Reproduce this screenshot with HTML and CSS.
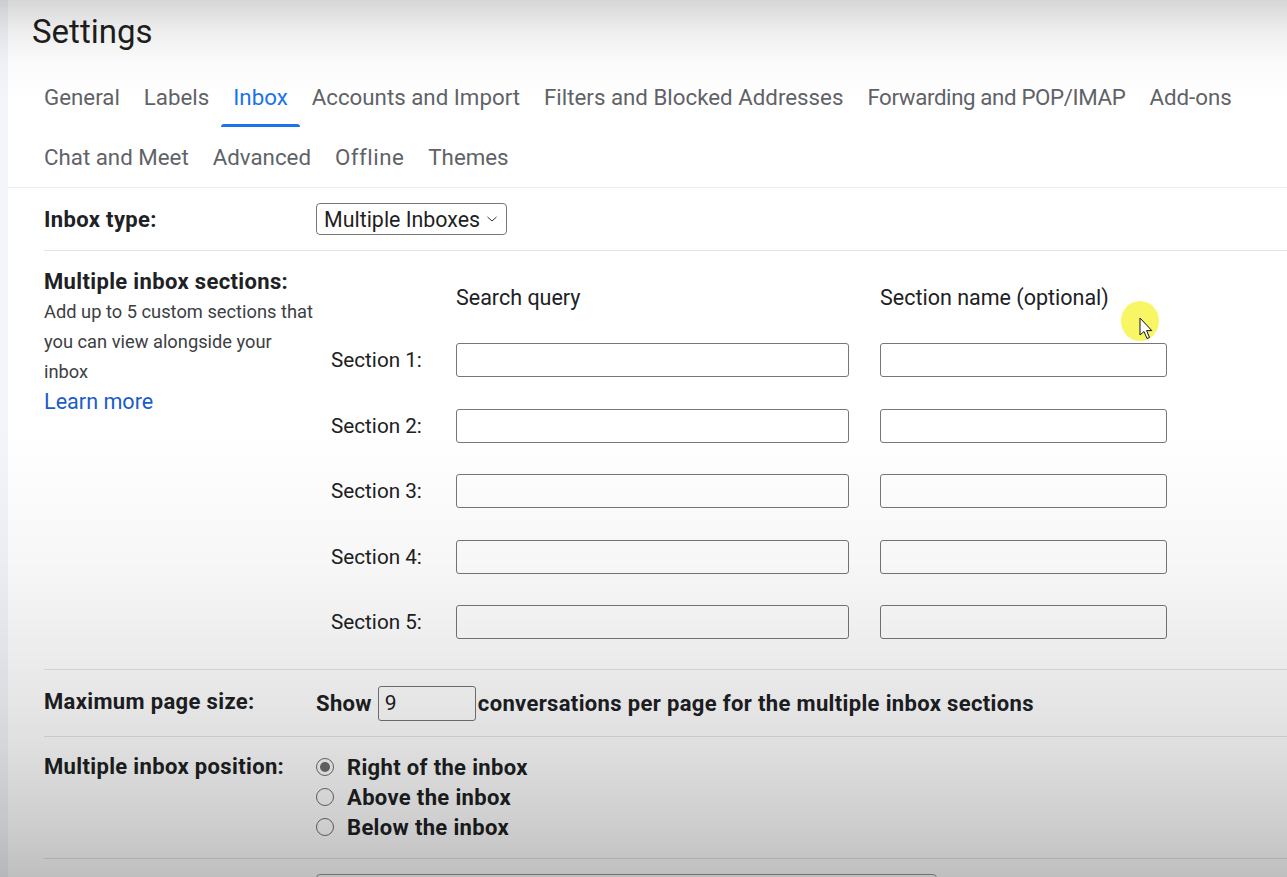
FILE: index.html
```html
<!DOCTYPE html>
<html lang="en">
<head>
<meta charset="utf-8">
<title>Settings</title>
<link rel="stylesheet" href="styles.css">
</head>
<body>
<div class="page">
  <main class="panel">
    <h1 class="title">Settings</h1>
    <nav class="tabs">
      <div class="tab-row">
        <a class="tab">General</a>
        <a class="tab">Labels</a>
        <a class="tab active">Inbox</a>
        <a class="tab">Accounts and Import</a>
        <a class="tab">Filters and Blocked Addresses</a>
        <a class="tab tab-tight">Forwarding and POP/IMAP</a>
        <a class="tab">Add-ons</a>
      </div>
      <div class="tab-row">
        <a class="tab">Chat and Meet</a>
        <a class="tab">Advanced</a>
        <a class="tab tab-wide">Offline</a>
        <a class="tab">Themes</a>
      </div>
    </nav>

    <section class="content">
      <div class="row row-type">
        <div class="label">Inbox type:</div>
        <div class="value">
          <div class="select">Multiple Inboxes
            <svg class="chev" width="12" height="8" viewBox="0 0 12 8"><path d="M1.5 2 L6 6 L10.5 2" fill="none" stroke="#333" stroke-width="1"/></svg>
          </div>
        </div>
      </div>

      <div class="row row-sections">
        <div class="label">
          <div class="label-title">Multiple inbox sections:</div>
          <p class="desc">Add up to 5 custom sections that you can view alongside your inbox</p>
          <a class="link">Learn more</a>
        </div>
        <div class="sections">
          <div></div>
          <div class="col-head">Search query</div>
          <div class="col-head">Section name (optional)</div>

          <div class="sec-label">Section 1:</div>
          <div class="field wide"></div>
          <div class="field narrow"></div>

          <div class="sec-label">Section 2:</div>
          <div class="field wide"></div>
          <div class="field narrow"></div>

          <div class="sec-label">Section 3:</div>
          <div class="field wide"></div>
          <div class="field narrow"></div>

          <div class="sec-label">Section 4:</div>
          <div class="field wide"></div>
          <div class="field narrow"></div>

          <div class="sec-label">Section 5:</div>
          <div class="field wide"></div>
          <div class="field narrow"></div>
        </div>
      </div>

      <div class="row row-size">
        <div class="label">Maximum page size:</div>
        <div class="value bold-line">
          <span>Show</span>
          <div class="num-field">9</div>
          <span class="after">conversations per page for the multiple inbox sections</span>
        </div>
      </div>

      <div class="row row-pos">
        <div class="label">Multiple inbox position:</div>
        <div class="radios">
          <div class="radio-line"><span class="radio checked"></span>Right of the inbox</div>
          <div class="radio-line"><span class="radio"></span>Above the inbox</div>
          <div class="radio-line"><span class="radio"></span>Below the inbox</div>
        </div>
      </div>

      <div class="row row-next">
        <div class="label"></div>
        <div class="next-box"></div>
      </div>
    </section>
  </main>
</div>

<div class="pointer">
  <span class="halo"></span>
  <svg class="arrow" width="16" height="24" viewBox="0 0 16 24"><path d="M1 1 L1 18 L5 14.5 L8 21.5 L10.5 20.5 L7.6 13.6 L12.8 13.6 Z" fill="#fff" stroke="#111" stroke-width="1" stroke-linejoin="round"/></svg>
</div>
</body>
</html>
```

FILE: styles.css
```css
* { box-sizing: border-box; }

html, body {
  margin: 0;
  padding: 0;
  height: 100%;
}

body {
  background: #f3f5fa;
  font-family: Roboto, "Noto Sans", Arial, sans-serif;
  color: #202124;
  overflow: hidden;
  position: relative;
}

/* video vignette over the whole frame */
body::after {
  content: "";
  position: fixed;
  inset: 0;
  pointer-events: none;
  background: linear-gradient(to bottom,
    rgba(0,0,0,0.16) 0px,
    rgba(0,0,0,0.07) 30px,
    rgba(0,0,0,0.02) 60px,
    rgba(0,0,0,0) 100px,
    rgba(0,0,0,0) 430px,
    rgba(0,0,0,0.03) 560px,
    rgba(0,0,0,0.07) 650px,
    rgba(0,0,0,0.12) 740px,
    rgba(0,0,0,0.19) 820px,
    rgba(0,0,0,0.25) 877px);
}

.page {
  padding-left: 8px;
  height: 100%;
}

.panel {
  background: #fff;
  height: 100%;
}

.title {
  margin: 0;
  padding: 12px 0 0 24px;
  height: 67px;
  font-size: 33px;
  line-height: 40px;
  font-weight: 400;
  color: #1f1f1f;
}

.tabs {
  padding-left: 24px;
  border-bottom: 1px solid #ececec;
}

.tab-row {
  display: flex;
  height: 60px;
}

.tab {
  display: flex;
  align-items: center;
  padding: 0 12px;
  font-size: 22.3px;
  color: #5f6368;
  position: relative;
}

.tab-tight { letter-spacing: -0.38px; }
.tab-wide { letter-spacing: 0.5px; }

.tab.active {
  color: #1a73e8;
}

.tab.active::after {
  content: "";
  position: absolute;
  left: 0;
  right: 0;
  bottom: 0;
  height: 3px;
  background: #1a73e8;
  border-radius: 3px 3px 0 0;
}

.content {
  padding-left: 36px;
}

.row {
  display: flex;
  border-bottom: 1px solid #e4e4e4;
}

.label {
  width: 272px;
  font-size: 22px;
  font-weight: 700;
  letter-spacing: 0.35px;
  color: #202124;
  flex: none;
}

.row-type {
  height: 63px;
  align-items: center;
}

.select {
  display: inline-flex;
  align-items: center;
  height: 32px;
  width: 191px;
  padding: 0 8px 0 7px;
  border: 1px solid #777;
  border-radius: 4px;
  font-size: 21.4px;
  color: #1f1f1f;
  background: #fff;
  justify-content: space-between;
}

.chev { flex: none; }

.row-sections {
  padding-top: 18px;
  padding-bottom: 30px;
  align-items: flex-start;
}

.label-title {
  line-height: 26px;
}

.desc {
  margin: 2px 0 0;
  font-size: 18.3px;
  font-weight: 400;
  letter-spacing: 0;
  line-height: 30px;
  color: #3c4043;
}

.link {
  display: block;
  font-size: 21.6px;
  font-weight: 400;
  letter-spacing: 0;
  line-height: 30px;
  color: #1a5dc8;
}

.sections {
  display: grid;
  grid-template-columns: 94px 393px 287px;
  column-gap: 31px;
  row-gap: 31.5px;
  margin-top: 13.5px;
  padding-left: 15px;
}

.col-head {
  font-size: 21.5px;
  line-height: 29px;
  color: #202124;
  white-space: nowrap;
}

.sec-label {
  font-size: 20.7px;
  line-height: 34px;
  color: #202124;
  white-space: nowrap;
}

.field {
  height: 34px;
  border: 1px solid #777;
  border-radius: 3px;
  background: transparent;
}

.row-size {
  height: 67px;
  align-items: center;
}

.row-size .label { margin-top: -4px; }

.bold-line {
  display: flex;
  align-items: center;
  font-size: 22px;
  font-weight: 700;
  letter-spacing: 0.35px;
  color: #202124;
}

.num-field {
  width: 98px;
  height: 35px;
  margin-left: 6px;
  margin-right: 2px;
  padding-left: 6px;
  border: 1px solid #777;
  border-radius: 3px;
  font-weight: 400;
  letter-spacing: 0;
  line-height: 33px;
  font-size: 21px;
}

.row-pos {
  padding-top: 15px;
  padding-bottom: 16px;
  align-items: flex-start;
}

.row-pos .label { line-height: 30px; }

.radios {
  display: flex;
  flex-direction: column;
}

.radio-line {
  display: flex;
  align-items: center;
  height: 30px;
  font-size: 22px;
  font-weight: 700;
  letter-spacing: 0.35px;
  color: #202124;
}

.radio {
  width: 18px;
  height: 18px;
  border: 1.5px solid #707070;
  border-radius: 50%;
  margin-right: 13px;
  display: flex;
  align-items: center;
  justify-content: center;
}

.radio.checked::after {
  content: "";
  width: 10px;
  height: 10px;
  border-radius: 50%;
  background: #6e6e6e;
}

.row-next {
  border-bottom: none;
  padding-top: 15px;
}

.next-box {
  width: 621px;
  height: 40px;
  border: 1px solid #999;
  border-radius: 4px;
}

.pointer {
  position: absolute;
  left: 1121px;
  top: 301px;
  width: 40px;
  height: 40px;
}

.halo {
  position: absolute;
  left: 0;
  top: 0;
  width: 38px;
  height: 40px;
  border-radius: 50%;
  background: rgba(248, 245, 80, 0.88);
}

.arrow {
  position: absolute;
  left: 18px;
  top: 16px;
}
```
